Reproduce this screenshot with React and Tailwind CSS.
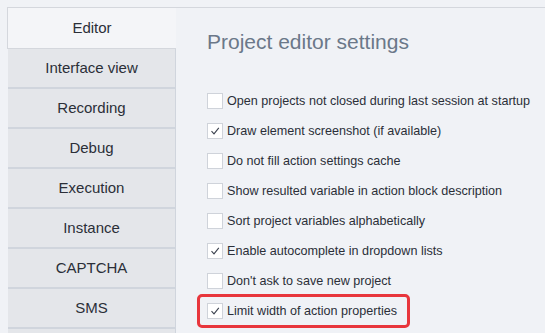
import React from "react";

const tabs = ["Interface view", "Recording", "Debug", "Execution", "Instance", "CAPTCHA", "SMS", ""];

const options = [
  { label: "Open projects not closed during last session at startup", checked: false },
  { label: "Draw element screenshot (if available)", checked: true },
  { label: "Do not fill action settings cache", checked: false },
  { label: "Show resulted variable in action block description", checked: false },
  { label: "Sort project variables alphabetically", checked: false },
  { label: "Enable autocomplete in dropdown lists", checked: true },
  { label: "Don't ask to save new project", checked: false },
  { label: "Limit width of action properties", checked: true, highlight: true },
];

function Checkbox({ checked }) {
  return (
    <span className="flex h-4 w-4 shrink-0 items-center justify-center border border-[#cfd3da] bg-white">
      {checked && (
        <svg width="10" height="10" viewBox="0 0 10 10" fill="none">
          <path d="M1.5 5.2 L4 7.8 L8.8 1.8" stroke="#3d4350" strokeWidth="1.1" />
        </svg>
      )}
    </span>
  );
}

export default function App() {
  return (
    <div className="flex h-[333px] w-[545px] overflow-hidden bg-[#f0f2f6] pl-[7px] pt-[7px] font-['Liberation_Sans',sans-serif] text-[#2b2f38]">
      <div className="flex w-[169px] shrink-0 flex-col border-t border-[#d4d7dd]">
        <div className="flex h-[41px] shrink-0 items-center justify-center border-b border-l border-[#d4d7dd] bg-[#f4f5f8] text-[15px]">
          Editor
        </div>
        {tabs.map((tab, i) => (
          <div
            key={i}
            className="ml-[1px] flex h-[40px] shrink-0 items-center justify-center border-b-2 border-r border-[#d0d5dd] bg-[#e4e6ea] text-[15px]"
          >
            {tab}
          </div>
        ))}
      </div>
      <div className="flex-1 border-t border-[#d4d7dd] pl-[31px]">
        <h1 className="mt-[21px] text-[21px] leading-[26px] text-[#6b7889]">Project editor settings</h1>
        <div className="mt-[31px] flex flex-col">
          {options.map((opt) => (
            <div key={opt.label} className="flex h-[30px] items-center">
              <div
                className={
                  opt.highlight
                    ? "-ml-[10px] flex items-center gap-[4px] rounded-[5px] border-[3px] border-[#e8363c] py-[6px] pl-[7px] pr-[10px]"
                    : "flex items-center gap-[4px]"
                }
              >
                <Checkbox checked={opt.checked} />
                <span className="text-[12.6px] leading-4">{opt.label}</span>
              </div>
            </div>
          ))}
        </div>
      </div>
    </div>
  );
}
